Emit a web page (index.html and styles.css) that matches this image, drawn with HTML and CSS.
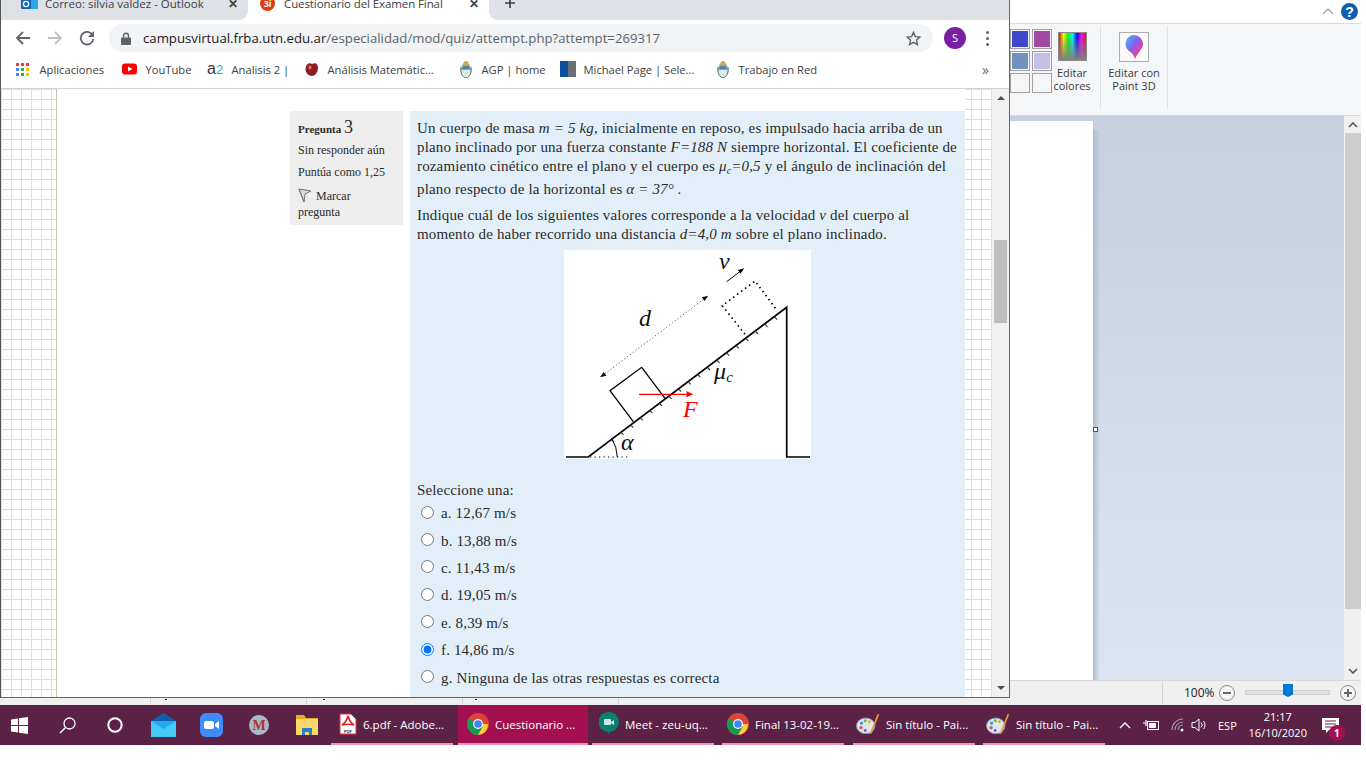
FILE: index.html
```html
<!DOCTYPE html>
<html>
  <head>
    <title>Cuestionario del Examen Final</title>
    <meta charset="UTF-8">
    <link rel="stylesheet" href="styles.css">
  </head>
  <body>
    <svg class="defs" width="0" height="0">
      <symbol id="chrome-logo" viewBox="0 0 24 24">
        <circle cx="12" cy="12" r="12" fill="#db4437"/>
        <path d="M12 12 1.6 18a12 12 0 0 0 10.4 6l5.2-9z" fill="#0f9d58"/>
        <path d="M12 12h11.1A12 12 0 0 1 12 24l5.2-9z" fill="#ffcd40"/>
        <path d="M12 12 1.6 18A12 12 0 0 1 1.6 6z" fill="#0f9d58"/>
        <circle cx="12" cy="12" r="5.4" fill="#fff"/>
        <circle cx="12" cy="12" r="4.2" fill="#4285f4"/>
      </symbol>
      <symbol id="paint-logo" viewBox="0 0 26 24">
        <ellipse cx="10.5" cy="14" rx="10" ry="8.5" fill="#dbe6ee" stroke="#7d93a8"/>
        <circle cx="6" cy="11" r="1.8" fill="#4a90d9"/>
        <circle cx="10" cy="8.5" r="1.7" fill="#7cb342"/>
        <circle cx="14.5" cy="9.5" r="1.6" fill="#e0b020"/>
        <circle cx="5.5" cy="16" r="1.8" fill="#d9534f"/>
        <circle cx="10" cy="19" r="1.6" fill="#7e57c2"/>
        <path d="M23.5 1 25 2 17 22 14.5 23z" fill="#e89a3c"/>
      </symbol>
      <symbol id="arms" viewBox="0 0 14 18">
        <ellipse cx="7" cy="10" rx="5" ry="7.5" fill="#7fa9bd"/>
        <path d="M2.500 10h9v3a4.500 4.500 0 0 1-9 0z" fill="#dfe9ee"/>
        <path d="M3.500 9a3.500 3.500 0 0 1 7 0z" fill="#4f86a6"/>
        <circle cx="7" cy="3.500" r="2.500" fill="#d6a93a"/>
        <path d="M2 7c-1 5 1 10 5 11 4-1 6-6 5-11" fill="none" stroke="#3f7f4f"/>
      </symbol>
    </svg>

    <div class="desktop">
      <!-- paint window, mostly covered by the browser -->
      <div class="paint">
        <div class="paint-title">
          <svg class="ribbon-chevron" width="12" height="7" viewBox="0 0 12 7"><path d="M1 6l5-5 5 5" fill="none" stroke="#a0a0a0" stroke-width="1.200"/></svg>
          <svg class="help" width="17" height="17" viewBox="0 0 17 17"><circle cx="8.500" cy="8.500" r="8.500" fill="#0f5fb0"/><text x="8.500" y="13.500" text-anchor="middle" class="help-mark">?</text></svg>
        </div>
        <div class="ribbon">
          <div class="swatches">
            <span class="swatch"><i class="c1"></i></span>
            <span class="swatch"><i class="c2"></i></span>
            <span class="swatch"><i class="c3"></i></span>
            <span class="swatch"><i class="c4"></i></span>
            <span class="swatch"><i></i></span>
            <span class="swatch"><i></i></span>
          </div>
          <div class="ribbon-btn edit-colors">
            <span class="rainbow"></span>
            <span>Editar<br>colores</span>
          </div>
          <div class="ribbon-btn paint3d">
            <span class="p3d-box">
              <svg width="20" height="26" viewBox="0 0 20 26">
                <defs>
                  <linearGradient id="balloon" x1="0" y1="0" x2="1" y2="1">
                    <stop offset="0" stop-color="#38c6e8"/>
                    <stop offset=".45" stop-color="#8a5cf0"/>
                    <stop offset=".8" stop-color="#f0407a"/>
                    <stop offset="1" stop-color="#f7a020"/>
                  </linearGradient>
                </defs>
                <path d="M10 1a9 9 0 0 1 9 9c0 5-5 8-8 15-1-4-3-6-6-8a9 9 0 0 1 5-16z" fill="url(#balloon)"/>
              </svg>
            </span>
            <span>Editar con<br>Paint 3D</span>
          </div>
        </div>
        <div class="workspace">
          <div class="canvas-area">
            <div class="canvas"></div>
            <div class="canvas-shadow"></div>
            <span class="handle"></span>
          </div>
          <div class="paint-scroll">
            <svg width="10" height="6" viewBox="0 0 10 6"><path d="M1 5l4-4 4 4" fill="none" stroke="#555" stroke-width="1.600"/></svg>
            <div class="paint-thumb"></div>
            <svg width="10" height="6" viewBox="0 0 10 6"><path d="M1 1l4 4 4-4" fill="none" stroke="#555" stroke-width="1.600"/></svg>
          </div>
        </div>
        <div class="statusbar">
          <div class="status-cell w150"></div>
          <div class="status-cell w156"><b class="mark m1"></b></div>
          <div class="status-cell w156"><b class="mark m2"></b></div>
          <div class="status-cell w156"><b class="mark m3"></b></div>
          <div class="status-cell w544"></div>
          <div class="zoom-label">100%</div>
          <svg class="zoom-btn" width="18" height="18" viewBox="0 0 18 18"><circle cx="9" cy="9" r="7.500" fill="#f4f4f4" stroke="#8c8c8c"/><path d="M5 9h8" stroke="#666" stroke-width="2"/></svg>
          <div class="zoom-track"><span class="zoom-thumb"></span></div>
          <svg class="zoom-btn" width="18" height="18" viewBox="0 0 18 18"><circle cx="9" cy="9" r="7.500" fill="#f4f4f4" stroke="#8c8c8c"/><path d="M5 9h8M9 5v8" stroke="#666" stroke-width="2"/></svg>
        </div>
      </div>

      <!-- browser window -->
      <div class="chrome">
        <div class="tabstrip">
          <div class="tab tab-off">
            <svg width="17" height="17" viewBox="0 0 17 17"><rect x="5" y="2" width="12" height="12" fill="#28a8ea"/><rect x="0" y="4" width="10" height="10" rx="1" fill="#0f63b5"/><circle cx="5" cy="9" r="2.600" fill="none" stroke="#fff" stroke-width="1.400"/></svg>
            <span class="tab-title">Correo: silvia valdez - Outlook</span>
            <span class="tab-close">✕</span>
          </div>
          <div class="tab tab-on">
            <span class="favicon">3i</span>
            <span class="tab-title">Cuestionario del Examen Final</span>
            <span class="tab-close">✕</span>
          </div>
          <div class="tab-rest">
            <svg width="12" height="12" viewBox="0 0 12 12"><path d="M6 1v10M1 6h10" stroke="#3c4043" stroke-width="1.600"/></svg>
          </div>
        </div>

        <div class="toolbar">
          <svg class="nav" width="16" height="16" viewBox="0 0 16 16"><path d="M15 8H2M8 2 2 8l6 6" fill="none" stroke="#5f6368" stroke-width="1.800"/></svg>
          <svg class="nav" width="16" height="16" viewBox="0 0 16 16"><path d="M1 8h13M8 2l6 6-6 6" fill="none" stroke="#bdc1c6" stroke-width="1.800"/></svg>
          <svg class="nav" width="16" height="16" viewBox="0 0 16 16"><path d="M13.500 5A6.300 6.300 0 1 0 14.300 9" fill="none" stroke="#5f6368" stroke-width="1.800"/><path d="M15 1v6H9z" fill="#5f6368"/></svg>
          <div class="omnibox">
            <svg width="10" height="13" viewBox="0 0 10 13"><path d="M2.500 6V3.800a2.500 2.500 0 0 1 5 0V6" fill="none" stroke="#5f6368" stroke-width="1.400"/><rect y="5.500" width="10" height="7.500" rx="1" fill="#5f6368"/></svg>
            <span class="url"><span class="url-host">campusvirtual.frba.utn.edu.ar</span>/especialidad/mod/quiz/attempt.php?attempt=269317</span>
            <svg class="star" width="15" height="15" viewBox="0 0 16 16"><path d="M8 1.500l2 4.500 4.800.5-3.600 3.200 1 4.800L8 12.100l-4.200 2.400 1-4.800L1.200 6.500 6 6z" fill="none" stroke="#5f6368" stroke-width="1.500"/></svg>
          </div>
          <span class="avatar">S</span>
          <span class="kebab"><i></i><i></i><i></i></span>
        </div>

        <div class="bookmarks">
          <div class="bm">
            <span class="apps"><i class="r"></i><i class="r"></i><i class="r"></i><i class="b"></i><i class="g"></i><i class="y"></i><i class="b"></i><i class="g"></i><i class="y"></i></span>
            Aplicaciones
          </div>
          <div class="bm">
            <svg width="16" height="16" viewBox="0 0 16 16"><rect y="2.500" width="15" height="11" rx="3" fill="#f00"/><path d="M6 5.500 10.500 8 6 10.500z" fill="#fff"/></svg>
            YouTube
          </div>
          <div class="bm">
            <span class="a2">a<b>2</b></span>
            Analisis 2 |
          </div>
          <div class="bm">
            <svg width="16" height="16" viewBox="0 0 16 16"><path d="M8 3c3-2 6.500 0 6 4.500S11 15 8 15s-7-3-6.500-7.500S5 1 8 3z" fill="#8d1f24"/><ellipse cx="6" cy="6.500" rx="1.500" ry="2" fill="#d8777a"/></svg>
            Análisis Matemátic...
          </div>
          <div class="bm">
            <svg class="arms-icon" width="14" height="18" viewBox="0 0 14 18"><use href="#arms"/></svg>
            AGP | home
          </div>
          <div class="bm">
            <span class="mp"><i></i><i></i></span>
            Michael Page | Sele...
          </div>
          <div class="bm">
            <svg class="arms-icon" width="14" height="18" viewBox="0 0 14 18"><use href="#arms"/></svg>
            Trabajo en Red
          </div>
          <span class="bm-more">»</span>
        </div>

        <div class="page">
          <div class="page-bg">
            <div class="page-col">
              <div class="question">
                <div class="qinfo">
                  <h3 class="qno">Pregunta <span>3</span></h3>
                  <div class="qstate">Sin responder aún</div>
                  <div class="qgrade">Puntúa como 1,25</div>
                  <div class="qflag">
                    <svg width="14" height="15" viewBox="0 0 14 15"><path d="M1 1l12 2-6 3-1 8z" fill="#d9d9d9" stroke="#777"/><path d="M1 1l5 13" stroke="#777"/></svg>
                    Marcar<br>pregunta
                  </div>
                </div>
                <div class="qcontent">
                  <p>Un cuerpo de masa <em>m = 5 kg,</em> inicialmente en reposo, es impulsado hacia arriba de un plano inclinado por una fuerza constante <em>F=188 N</em> siempre horizontal. El coeficiente de rozamiento cinético entre el plano y el cuerpo es <em>μ<sub>c</sub>=0,5</em> y el ángulo de inclinación del plano respecto de la horizontal es <em>α = 37° .</em></p>
                  <p>Indique cuál de los siguientes valores corresponde a la velocidad <em>v</em> del cuerpo al momento de haber recorrido una distancia <em>d=4,0 m</em> sobre el plano inclinado.</p>
                  <svg class="figure" width="247" height="209" viewBox="0 0 247 209">
                    <rect width="247" height="209" fill="#fff"/>
                    <path d="M2 207H24.300L222.700 57.300V207H246" fill="none" stroke="#000" stroke-width="1.700"/>
                    <path d="M47 189l3 3m6.600-10.200 3 3m6.600-10.200 3 3m6.600-10.200 3 3m6.600-10.200 3 3m6.600-10.200 3 3m6.600-10.200 3 3m6.600-10.200 3 3m6.600-10.200 3 3m6.600-10.200 3 3m6.600-10.200 3 3m6.600-10.200 3 3m6.600-10.200 3 3m6.600-10.200 3 3m6.600-10.200 3 3m6.600-10.200 3 3m6.600-10.200 3 3m6.600-10.200 3 3" fill="none" stroke="#333" stroke-width="1.100"/>
                    <path d="M69.300 171.700 46 140.700 77.700 117.300 101 148.300" fill="none" stroke="#000" stroke-width="1.300"/>
                    <path d="M181 84.300 158.300 55.700 191 31 212.700 60" fill="none" stroke="#000" stroke-width="1.600" stroke-dasharray="1.600 3.400"/>
                    <path d="M38 126 142 47.500" fill="none" stroke="#444" stroke-width=".9" stroke-dasharray="1.200 2.300"/>
                    <path d="M36 127.300l6.500-1.600-2.800-3.700zM144.300 45.700l-6.500 1.600 2.800 3.700z" fill="#111"/>
                    <path d="M162.700 31.700 178 20" fill="none" stroke="#000"/>
                    <path d="M180.300 18.300l-6.500 1.600 2.800 3.700z" fill="#000"/>
                    <path d="M75 144.300H127" fill="none" stroke="#f00" stroke-width="1.200"/>
                    <path d="M129.300 144.300l-7.500-3.200 1.500 3.200-1.500 3.200z" fill="#f00"/>
                    <path d="M47.700 188.300Q53 197 53.300 207" fill="none" stroke="#000"/>
                    <path d="M26 207H64" fill="none" stroke="#000" stroke-dasharray="1.300 3.200"/>
                    <text x="155" y="19" class="fig">v</text>
                    <text x="75" y="76" class="fig">d</text>
                    <text x="150" y="129" class="fig">μ<tspan class="fig-sub" dy="3">c</tspan></text>
                    <text x="119" y="167" class="fig fig-red">F</text>
                    <text x="57" y="200" class="fig">α</text>
                  </svg>
                  <div class="prompt">Seleccione una:</div>
                  <div class="answers">
                    <label class="answer"><input type="radio" name="q3"> a. 12,67 m/s</label>
                    <label class="answer"><input type="radio" name="q3"> b. 13,88 m/s</label>
                    <label class="answer"><input type="radio" name="q3"> c. 11,43 m/s</label>
                    <label class="answer"><input type="radio" name="q3"> d. 19,05 m/s</label>
                    <label class="answer"><input type="radio" name="q3"> e. 8,39 m/s</label>
                    <label class="answer"><input type="radio" name="q3" checked> f. 14,86 m/s</label>
                    <label class="answer"><input type="radio" name="q3"> g. Ninguna de las otras respuestas es correcta</label>
                  </div>
                </div>
              </div>
            </div>
          </div>
          <div class="vscroll">
            <span class="arrow-up"></span>
            <div class="vthumb"></div>
            <span class="arrow-down"></span>
          </div>
        </div>
      </div>

      <!-- taskbar -->
      <div class="taskbar">
        <div class="tb-icon">
          <svg width="17" height="17" viewBox="0 0 17 17"><path d="M0 2.500 7 1.500V8H0zM8 1.300 17 0V8H8zM0 9H7V15.500L0 14.500zM8 9H17V17L8 15.700z" fill="#fff"/></svg>
        </div>
        <div class="tb-icon">
          <svg width="17" height="17" viewBox="0 0 17 17"><circle cx="10.500" cy="6.500" r="5.500" fill="none" stroke="#fff" stroke-width="1.300"/><path d="M6.500 10.500 1 16" stroke="#fff" stroke-width="1.500"/></svg>
        </div>
        <div class="tb-icon">
          <svg width="16" height="16" viewBox="0 0 16 16"><circle cx="8" cy="8" r="6.700" fill="none" stroke="#fff" stroke-width="2"/></svg>
        </div>
        <div class="tb-icon">
          <svg width="25" height="24" viewBox="0 0 25 24"><path d="M12.500 0 25 8H0z" fill="#0f5fb0"/><rect y="8" width="25" height="16" fill="#28a8ea"/><path d="M0 8l12.500 8L25 8v16H0z" fill="#50d9ff" opacity=".7"/></svg>
        </div>
        <div class="tb-icon">
          <svg width="23" height="24" viewBox="0 0 23 24"><rect width="23" height="24" rx="6" fill="#3d8bfd"/><rect x="4" y="8" width="10" height="8" rx="2" fill="#fff"/><path d="M15 11l4-3v8l-4-3z" fill="#fff"/></svg>
        </div>
        <div class="tb-icon">
          <svg width="20" height="20" viewBox="0 0 20 20"><circle cx="10" cy="10" r="10" fill="#a9b8c4"/><text x="10" y="15" text-anchor="middle" class="m-logo">M</text></svg>
        </div>
        <div class="tb-icon">
          <svg width="22" height="20" viewBox="0 0 22 20"><path d="M0 0h8l2 3h12v17H0z" fill="#e6ac2a"/><rect y="4" width="22" height="16" fill="#ffd766"/><path d="M6 13h10v7h-3v-3H9v3H6z" fill="#2a7fc9"/></svg>
        </div>
        <div class="tasks">
          <div class="task">
            <svg width="18" height="22" viewBox="0 0 18 22"><path d="M1 1h11l5 5v15H1z" fill="#fff" stroke="#d33"/><path d="M9 3c-1 4-3 7-6 9 4-1 8-1 12 0-3-2-5-5-6-9z" fill="none" stroke="#e02020" stroke-width="1.600"/><text x="9" y="20" text-anchor="middle" class="pdf-mark">PDF</text></svg>
            <span>6.pdf - Adobe...</span>
          </div>
          <div class="task active">
            <svg width="22" height="22"><use href="#chrome-logo"/></svg>
            <span>Cuestionario ...</span>
          </div>
          <div class="task task-meet">
            <svg width="20" height="24" viewBox="0 0 20 24"><path d="M10 0a10 10 0 0 1 0 20l-1 4v-4A10 10 0 0 1 10 0z" fill="#0b7f72"/><rect x="5" y="7" width="7" height="6" rx="1" fill="#cfe8e4"/><path d="M12 10l3-2v5l-3-2z" fill="#cfe8e4"/></svg>
            <span>Meet - zeu-uq...</span>
          </div>
          <div class="task task-chrome">
            <svg width="22" height="22"><use href="#chrome-logo"/></svg>
            <span>Final 13-02-19...</span>
          </div>
          <div class="task task-paint">
            <svg width="24" height="24"><use href="#paint-logo"/></svg>
            <span>Sin título - Pai...</span>
          </div>
          <div class="task task-paint">
            <svg width="24" height="24"><use href="#paint-logo"/></svg>
            <span>Sin título - Pai...</span>
          </div>
        </div>
        <div class="tray">
          <svg width="12" height="7" viewBox="0 0 12 7"><path d="M1 6l5-5 5 5" fill="none" stroke="#fff" stroke-width="1.300"/></svg>
          <svg width="17" height="12" viewBox="0 0 17 12"><path d="M0 4h3M3 1v6" stroke="#fff" stroke-width="1.200"/><rect x="4.500" y="2.500" width="11" height="8" fill="none" stroke="#fff"/><rect x="6" y="4" width="7" height="5" fill="#fff"/></svg>
          <svg width="14" height="14" viewBox="0 0 14 14"><path d="M1 12A11 11 0 0 1 12 1M4 12a8 8 0 0 1 8-8M7 12a5 5 0 0 1 5-5" fill="none" stroke="#a99aa5" stroke-width="1.100"/><circle cx="11" cy="12" r="1.500" fill="#fff"/></svg>
          <svg width="17" height="14" viewBox="0 0 17 14"><path d="M1 4.500h3L8 1v12L4 9.500H1z" fill="none" stroke="#fff"/><path d="M10 4.500a3.500 3.500 0 0 1 0 5M12.500 3a6 6 0 0 1 0 8" fill="none" stroke="#fff"/></svg>
          <span class="tray-lang">ESP</span>
          <span class="clock">21:17<br>16/10/2020</span>
          <span class="notify">
            <svg width="17" height="15" viewBox="0 0 17 15"><path d="M0 0h17v12H7l-3 3v-3H0z" fill="#fff"/><path d="M3 3h11M3 6h11M3 9h7" stroke="#5b2246"/></svg>
            <span class="badge">1</span>
          </span>
        </div>
      </div>
    </div>
  </body>
</html>
```

FILE: styles.css
```css
/* base */
body {
	margin: 0;
	background: #fff;
	font-family: "Open Sans", sans-serif;
	color: #333;
}
.defs {
	position: absolute;
}
.desktop {
	position: relative;
	width: 1361px;
	height: 768px;
	overflow: hidden;
}

/* paint window */
.paint {
	display: flex;
	flex-direction: column;
	height: 705px;
}
.paint-title {
	display: flex;
	justify-content: flex-end;
	align-items: center;
	gap: 7px;
	height: 23px;
	padding-right: 3px;
	border-bottom: 1px solid #dadbdc;
	flex: none;
}
.help-mark {
	font: bold 14px "Liberation Sans", sans-serif;
	fill: #fff;
}
.ribbon {
	display: flex;
	height: 91px;
	flex: none;
	padding-left: 1008px;
	background: #f5f6f7;
	border-bottom: 1px solid #dadbdc;
	font-size: 11px;
	line-height: 13px;
	color: #3a3a3a;
}
.swatches {
	display: grid;
	grid-template-columns: 20px 20px;
	grid-auto-rows: 20px;
	gap: 2px;
	padding: 5px 0 0 2px;
	height: 64px;
}
.swatch {
	display: block;
	border: 1px solid #a0a0a0;
	padding: 1px;
	box-sizing: border-box;
}
.swatch i {
	display: block;
	height: 100%;
}
.c1 { background: #3f48cc; }
.c2 { background: #a349a4; }
.c3 { background: #7092be; }
.c4 { background: #c8bfe7; }
.ribbon-btn {
	display: flex;
	flex-direction: column;
	align-items: center;
	text-align: center;
	height: 83px;
	margin-top: 2px;
	padding-top: 6px;
	box-sizing: border-box;
}
.edit-colors {
	width: 57px;
	margin-left: -8px;
	gap: 5px;
	border-right: 1px solid #dfe0e1;
}
.paint3d {
	width: 67px;
	gap: 4px;
	border-right: 1px solid #dfe0e1;
}
.rainbow {
	display: block;
	width: 27px;
	height: 27px;
	border: 1px solid #888;
	background: linear-gradient(to bottom, transparent, #808080), linear-gradient(to right, #f00, #ff0, #0f0, #0ff, #00f, #f0f, #f00);
}
.p3d-box {
	display: flex;
	align-items: center;
	justify-content: center;
	width: 28px;
	height: 28px;
	border: 1px solid #adadad;
	background: #f9f9f9;
}
.workspace {
	flex: 1;
	display: flex;
	min-height: 0;
}
.canvas-area {
	flex: 1;
	position: relative;
	display: flex;
	padding: 5px 0 0 900px;
	background: linear-gradient(#c5cfe0, #dce5f1);
}
.canvas {
	width: 193px;
	background: #fff;
}
.canvas-shadow {
	width: 7px;
	margin-top: 9px;
	background: linear-gradient(to right, #aebccf, transparent);
}
.handle {
	position: absolute;
	left: 1093px;
	top: 311px;
	width: 3px;
	height: 3px;
	background: #fff;
	border: 1px solid #555;
}
.paint-scroll {
	display: flex;
	flex-direction: column;
	align-items: center;
	width: 17px;
	padding: 6px 0;
	box-sizing: border-box;
	background: #f0f0f0;
}
.paint-thumb {
	width: 16px;
	height: 476px;
	margin: 5px 0 auto;
	background: #cdcdcd;
}
.statusbar {
	display: flex;
	height: 25px;
	flex: none;
	padding-bottom: 1px;
	background: #f0f0f0;
	border-top: 1px solid #d9d9d9;
	box-sizing: border-box;
	align-items: center;
	font-size: 12px;
	color: #222;
}
.status-cell {
	position: relative;
	height: 22px;
	border-right: 1px solid #d5d5d5;
	box-sizing: border-box;
}
.w150 { width: 151px; }
.w156 { width: 156px; }
.w544 { width: 544px; }
.mark {
	position: absolute;
	top: 17px;
	width: 2px;
	height: 1px;
	background: #223;
}
.m1 { left: 14px; }
.m2 { left: 16px; }
.m3 { left: 12px; }
.zoom-label {
	margin-left: 21px;
	width: 34px;
}
.zoom-btn {
	flex: none;
}
.zoom-track {
	position: relative;
	width: 83px;
	height: 3px;
	margin: 0 9px 0 9px;
	background: #dfe1e1;
	border: 1px solid #d0d2d2;
}
.zoom-thumb {
	position: absolute;
	left: 37px;
	top: -7px;
	width: 10px;
	height: 13px;
	background: #0078d7;
	clip-path: polygon(0 0, 100% 0, 100% 80%, 50% 100%, 0 80%);
}

/* browser window */
.chrome {
	position: absolute;
	left: 0;
	top: 0;
	width: 1010px;
	height: 698px;
	display: flex;
	flex-direction: column;
	box-sizing: border-box;
	background: #fff;
	border-left: 1px solid #555;
	border-right: 1px solid #666;
	border-bottom: 1px solid #666;
}
.tabstrip {
	display: flex;
	height: 20px;
	flex: none;
	overflow: hidden;
	background: #fff;
	font-size: 11.500px;
	color: #3c4043;
}
.tab {
	display: flex;
	align-items: center;
	height: 34px;
	margin-top: -14px;
	box-sizing: border-box;
}
.tab-off {
	width: 247px;
	padding-left: 20px;
	gap: 7px;
	background: #dee1e6;
	border-bottom-right-radius: 9px;
}
.tab-on {
	width: 241px;
	padding-left: 12px;
	gap: 9px;
	letter-spacing: -.1px;
}
.tab-title {
	white-space: nowrap;
	width: 176px;
}
.tab-close {
	font-size: 12px;
	font-weight: bold;
}
.favicon {
	width: 15px;
	height: 15px;
	line-height: 15px;
	border-radius: 50%;
	background: #dd3b10;
	color: #fff;
	font-size: 9px;
	font-weight: bold;
	text-align: center;
}
.tab-rest {
	flex: 1;
	display: flex;
	padding-left: 15px;
	background: #dee1e6;
	border-bottom-left-radius: 9px;
}
.tab-rest svg {
	margin-top: -3px;
}
.toolbar {
	display: flex;
	align-items: center;
	height: 36px;
	flex: none;
}
.nav {
	margin-left: 16px;
	flex: none;
}
.nav:first-child {
	margin-left: 14px;
}
.omnibox {
	display: flex;
	align-items: center;
	width: 824px;
	height: 28px;
	margin-left: 14px;
	padding: 0 12px 0 12px;
	gap: 12px;
	border-radius: 14px;
	background: #f1f3f4;
	box-sizing: border-box;
	font-size: 13.200px;
	color: #5f6368;
}
.url {
	flex: 1;
	white-space: nowrap;
}
.url-host {
	color: #202124;
}
.star {
	flex: none;
}
.avatar {
	width: 22px;
	height: 22px;
	line-height: 22px;
	margin-left: 11px;
	border-radius: 50%;
	background: #7b1fa2;
	color: #fff;
	font-size: 11px;
	text-align: center;
}
.kebab {
	display: flex;
	flex-direction: column;
	gap: 3px;
	margin-left: 20px;
}
.kebab i {
	width: 3px;
	height: 3px;
	border-radius: 50%;
	background: #5f6368;
}
.bookmarks {
	display: grid;
	grid-template-columns: 106px 85px 97px 155px 101px 156px 266px 20px;
	align-items: center;
	height: 33px;
	flex: none;
	padding: 0 0 6px 15px;
	box-sizing: border-box;
	border-bottom: 1px solid #d3d4d5;
	font-size: 11.200px;
	color: #3c4043;
	white-space: nowrap;
}
.bm {
	display: flex;
	align-items: center;
	gap: 7.500px;
}
.arms-icon {
	margin-right: 1px;
}
.apps {
	display: grid;
	grid-template-columns: repeat(3, 3px);
	grid-auto-rows: 3px;
	gap: 2px;
	width: 16px;
	flex: none;
}
.apps i { display: block; }
.apps .r { background: #ea4335; }
.apps .b { background: #4285f4; }
.apps .g { background: #34a853; }
.apps .y { background: #fbbc05; }
.a2 {
	width: 17px;
	font-family: "Liberation Sans", sans-serif;
	font-size: 16px;
	color: #3a3a3a;
}
.a2 b {
	font-weight: normal;
	font-size: 13px;
	color: #3aa8b8;
}
.mp {
	display: flex;
	flex: none;
	width: 16px;
	height: 16px;
}
.mp i {
	flex: 1;
	background: #0b4ea2;
}
.mp i + i {
	background: #6b6e73;
}
.bm-more {
	font-size: 14px;
	color: #666;
}

/* moodle page */
.page {
	flex: 1;
	display: flex;
	min-height: 0;
}
.page-bg {
	flex: 1;
	min-width: 0;
	padding-left: 55px;
	overflow: hidden;
	background-color: #fff;
	background-image: linear-gradient(to right, #e0dedc 1px, transparent 1px), linear-gradient(to bottom, #e0dedc 1px, transparent 1px);
	background-size: 10px 10px;
	background-position: 0 0;
}
.page-col {
	width: 909px;
	height: 100%;
	box-sizing: border-box;
	padding: 22px 0 0 233px;
	background: #fff;
	border-left: 1px solid #c4c29e;
}
.question {
	display: flex;
	align-items: flex-start;
	gap: 7px;
	height: 100%;
	font-family: "Liberation Serif", serif;
	color: #2a2a2a;
}
.qinfo {
	width: 113px;
	height: 114px;
	flex: none;
	padding: 7px 7px 7px 8px;
	box-sizing: border-box;
	background: #eee;
	font-size: 12px;
	line-height: 14px;
}
.qno {
	margin: 0 0 5px;
	font-size: 11px;
	line-height: 18px;
}
.qno span {
	font-size: 18px;
	font-weight: normal;
}
.qstate {
	margin-bottom: 8px;
}
.qgrade {
	margin-bottom: 9px;
}
.qflag {
	line-height: 16px;
}
.qflag svg {
	vertical-align: -3px;
	margin-right: 1px;
}
.qcontent {
	flex: 1;
	height: 100%;
	padding: 8px 7px 0;
	box-sizing: border-box;
	background: #e2eff9;
	font-size: 15px;
	letter-spacing: .15px;
	line-height: 19px;
	overflow: hidden;
}
.qcontent p {
	margin: 0 0 7px;
}
.qcontent sub {
	font-size: 10px;
	vertical-align: -3px;
}
.figure {
	display: block;
	margin: -1px 0 0 147px;
}
.fig {
	font: italic 24px "Liberation Serif", serif;
	fill: #111;
}
.fig-sub {
	font-size: 15px;
}
.fig-red {
	fill: #f00;
}
.prompt {
	margin-top: 22px;
}
.answers {
	padding-left: 4px;
}
.answer {
	display: flex;
	align-items: center;
	height: 27.400px;
}
.answer input {
	width: 13px;
	height: 13px;
	margin: 0 7px 3px 0;
}
.vscroll {
	display: flex;
	flex-direction: column;
	align-items: center;
	width: 17px;
	flex: none;
	background: #f1f1f1;
}
.arrow-up,
.arrow-down {
	width: 0;
	height: 0;
	border-left: 4px solid transparent;
	border-right: 4px solid transparent;
}
.arrow-up {
	margin-top: 7px;
	border-bottom: 4px solid #505050;
}
.arrow-down {
	margin-top: auto;
	margin-bottom: 7px;
	border-top: 4px solid #505050;
}
.vthumb {
	width: 13px;
	height: 83px;
	margin-top: 140px;
	background: #bebebe;
}

/* taskbar */
.taskbar {
	display: flex;
	align-items: stretch;
	height: 40px;
	background: #5b2246;
	color: #fff;
	font-size: 11.500px;
}
.tb-icon {
	display: flex;
	align-items: center;
	justify-content: center;
	width: 48px;
	flex: none;
}
.tb-icon:first-child {
	margin-left: -5px;
}
.m-logo {
	font: bold 14px "Liberation Serif", serif;
	fill: #a33;
}
.pdf-mark {
	font: bold 4px "Liberation Sans", sans-serif;
	fill: #333;
}
.tasks {
	display: grid;
	grid-template-columns: 127px 134px 130px 131px 130px 122px;
	flex: none;
}
.task {
	display: flex;
	align-items: center;
	gap: 6px;
	width: 122px;
	padding-left: 8px;
	box-sizing: border-box;
	border-bottom: 2px solid #f291b9;
	white-space: nowrap;
}
.task.active {
	width: 130px;
	background: #a3104f;
	padding-left: 9px;
}
.task-meet {
	padding-left: 7px;
}
.task-chrome {
	padding-left: 5px;
}
.task-paint {
	padding-left: 3px;
}
.tray {
	display: flex;
	align-items: center;
	margin-left: 14px;
	font-size: 11px;
}
.tray svg {
	flex: none;
}
.tray > svg:nth-child(1) { margin-right: 12px; }
.tray > svg:nth-child(2) { margin-right: 11px; }
.tray > svg:nth-child(3) { margin-right: 6px; }
.tray-lang {
	margin-left: 10px;
}
.clock {
	width: 64px;
	margin-left: 9px;
	line-height: 16px;
	text-align: center;
}
.notify {
	position: relative;
	display: block;
	margin-left: 12px;
	width: 17px;
	height: 15px;
}
.badge {
	position: absolute;
	left: 7px;
	top: 7px;
	width: 16px;
	height: 16px;
	line-height: 16px;
	border-radius: 50%;
	background: #a3104f;
	text-align: center;
	font-size: 10px;
	font-weight: bold;
}
```
